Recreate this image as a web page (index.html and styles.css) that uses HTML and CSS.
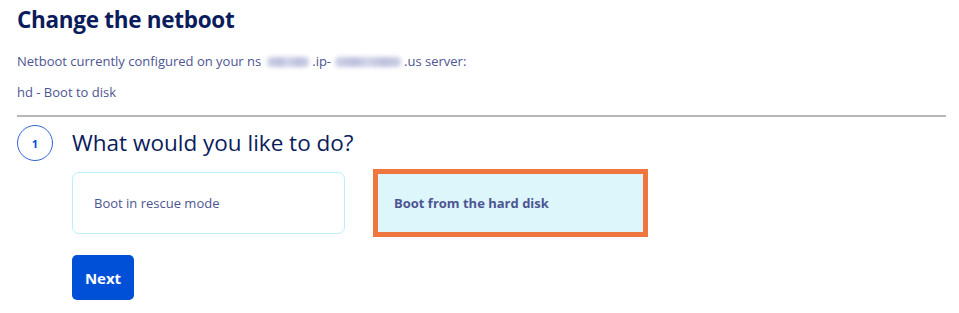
FILE: index.html
```html
<!DOCTYPE html>
<html lang="en">
<head>
<meta charset="utf-8">
<title>Change the netboot</title>
<link rel="stylesheet" href="styles.css">
</head>
<body>
<main class="page">
  <h1 class="title">Change the netboot</h1>
  <p class="text">Netboot currently configured on your ns<span class="blur b1" aria-hidden="true"></span>.ip-<span class="blur b2" aria-hidden="true"></span>.us server:</p>
  <p class="text current">hd - Boot to disk</p>
  <hr class="sep">
  <section class="step">
    <div class="step-head">
      <span class="step-num">1</span>
      <h2 class="step-title">What would you like to do?</h2>
    </div>
    <div class="options">
      <div class="option">Boot in rescue mode</div>
      <div class="option selected">Boot from the hard disk</div>
    </div>
    <button class="next" type="button">Next</button>
  </section>
</main>
</body>
</html>
```

FILE: styles.css
```css
html, body {
  margin: 0;
  padding: 0;
  background: #ffffff;
}
body {
  font-family: "Open Sans", "Liberation Sans", sans-serif;
  color: #4d5592;
}
.page {
  padding: 4px 13px 0 17px;
}
.title {
  margin: 0;
  font-size: 22.5px;
  line-height: 32px;
  font-weight: 700;
  color: #0b1c5c;
  letter-spacing: -0.3px;
}
.text {
  margin: 16px 0 0;
  font-size: 13px;
  line-height: 18px;
  white-space: nowrap;
}
.current {
  margin-top: 13px;
}
.blur {
  display: inline-block;
  height: 10px;
  vertical-align: -1px;
  border-radius: 4px;
  background: linear-gradient(90deg, #cfd2e7 0%, #bcc0dc 30%, #d2d4e9 50%, #bcc0dc 75%, #cdd0e6 100%);
  filter: blur(2px);
}
.b1 { width: 42px; margin: 0 3px 0 6px; }
.b2 { width: 66px; margin: 0 3px 0 4px; }
.sep {
  margin: 14px 0 0;
  border: 0;
  border-top: 2px solid #b8b8b8;
}
.step {
  margin-top: 8px;
}
.step-head {
  display: flex;
  align-items: center;
  gap: 19px;
}
.step-num {
  width: 34px;
  height: 34px;
  border: 1px solid #2f63d8;
  border-radius: 50%;
  display: flex;
  align-items: center;
  justify-content: center;
  font-size: 11px;
  font-weight: 700;
  color: #0050d7;
}
.step-title {
  margin: 0;
  font-size: 22.5px;
  line-height: 36px;
  font-weight: 400;
  color: #0b1c5c;
}
.options {
  margin: 8px 0 0 55px;
  display: flex;
  align-items: center;
  gap: 28px;
}
.option {
  box-sizing: border-box;
  width: 273px;
  height: 62px;
  border: 1px solid #b9f0fc;
  border-radius: 7px;
  display: flex;
  align-items: center;
  padding-left: 21px;
  font-size: 13px;
  color: #4d5592;
}
.option.selected {
  width: 275px;
  height: 68px;
  border: 5px solid #f07640;
  border-radius: 0;
  background: #dcf6fc;
  font-weight: 700;
  padding-left: 16px;
}
.next {
  margin: 18px 0 0 55px;
  width: 62px;
  height: 45px;
  border: 0;
  border-radius: 5px;
  background: #0050d7;
  color: #ffffff;
  font-family: inherit;
  font-size: 15px;
  font-weight: 700;
  padding: 0;
}
```
